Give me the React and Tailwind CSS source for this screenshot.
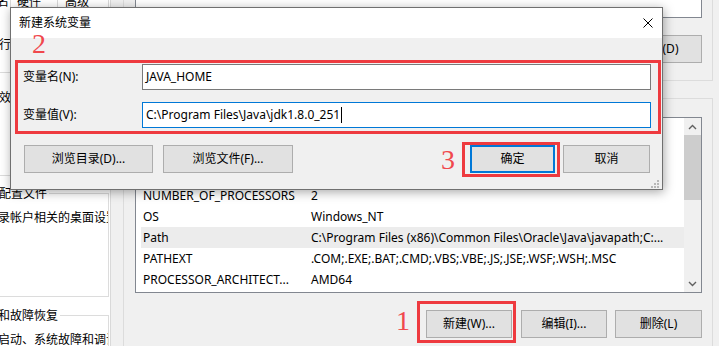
import React from 'react';

const sysVars = [
  ['ComSpec', 'C:\\WINDOWS\\system32\\cmd.exe'],
  ['DriverData', 'C:\\Windows\\System32\\Drivers\\DriverData'],
  ['NUMBER_OF_PROCESSORS', '2'],
  ['OS', 'Windows_NT'],
  ['Path', 'C:\\Program Files (x86)\\Common Files\\Oracle\\Java\\javapath;C:...'],
  ['PATHEXT', '.COM;.EXE;.BAT;.CMD;.VBS;.VBE;.JS;.JSE;.WSF;.WSH;.MSC'],
  ['PROCESSOR_ARCHITECT...', 'AMD64'],
];

const WinButton = ({ children, className = '' }) => (
  <div
    className={`flex h-[28px] shrink-0 items-center justify-center border border-[#adadad] bg-[#e1e1e1] text-[12px] text-black ${className}`}
  >
    {children}
  </div>
);

const Chevron = ({ down }) => (
  <svg width="9" height="6" viewBox="0 0 9 6">
    <path
      d={down ? 'M1 1 L4.5 4.5 L8 1' : 'M1 5 L4.5 1.5 L8 5'}
      fill="none"
      stroke="#606060"
      strokeWidth="1.4"
    />
  </svg>
);

export default function App() {
  return (
    <div className="relative flex h-[346px] w-[719px] overflow-hidden bg-[#f0f0f0] font-['Noto_Sans','Noto_Sans_CJK_SC',sans-serif] text-[12px] text-black">
      {/* System Properties - Advanced tab (behind) */}
      <div className="flex w-[111px] shrink-0 flex-col overflow-hidden border-r border-[#d9d9d9] bg-white">
        <div className="h-[8px] shrink-0 overflow-hidden">
          <div className="mt-[-7px] flex h-[17px] items-center leading-[17px]">
            <div className="h-full w-[11px] shrink-0 overflow-hidden whitespace-nowrap border-r border-[#d9d9d9]">
              <span className="ml-[-39px] inline-block">计算机名</span>
            </div>
            <div className="h-full w-[47px] shrink-0 border-r border-[#d9d9d9] pl-[6px]">硬件</div>
            <div className="h-full w-[51px] shrink-0 border-r border-[#d9d9d9] pl-[7px]">高级</div>
          </div>
        </div>

        <div className="mt-[28px] h-[17px] shrink-0 overflow-hidden whitespace-nowrap leading-[17px]">
          <span className="ml-[-25px] inline-block">要进行大多数更改，你必须作为管理员登录。</span>
        </div>

        {/* 性能 */}
        <div className="mr-[1px] mt-[19px] flex h-[104px] shrink-0 flex-col border-y border-r border-[#dcdcdc] pt-[16px]">
          <div className="h-[17px] overflow-hidden whitespace-nowrap leading-[17px]">
            <span className="ml-[-25px] inline-block">视觉效果，处理器计划，内存使用，以及虚拟内存</span>
          </div>
        </div>

        {/* 用户配置文件 */}
        <div className="mr-[1px] mt-[17px] flex h-[104px] shrink-0 flex-col border-b border-r border-[#dcdcdc]">
          <div className="mt-[-8px] flex h-[17px] items-center overflow-hidden leading-[17px]">
            <span className="ml-[-25px] shrink-0 whitespace-nowrap">用户配置文件</span>
            <div className="ml-[2px] h-px flex-1 bg-[#dcdcdc]" />
          </div>
          <div className="mt-[7px] h-[17px] overflow-hidden whitespace-nowrap leading-[17px]">
            <span className="ml-[-26px] inline-block">与登录帐户相关的桌面设置</span>
          </div>
        </div>

        {/* 启动和故障恢复 */}
        <div className="mr-[1px] mt-[18px] flex h-[60px] shrink-0 flex-col border-r border-[#dcdcdc]">
          <div className="mt-[-8px] flex h-[17px] items-center overflow-hidden leading-[17px]">
            <span className="ml-[-26px] shrink-0 whitespace-nowrap">启动和故障恢复</span>
            <div className="ml-[2px] h-px flex-1 bg-[#dcdcdc]" />
          </div>
          <div className="mt-[7px] h-[17px] overflow-hidden whitespace-nowrap leading-[17px]">
            <span className="ml-[-26px] inline-block">系统启动、系统故障和调试信息</span>
          </div>
        </div>
      </div>

      {/* Environment Variables (behind) */}
      <div className="flex flex-1 flex-col pl-[12px] pr-[6px]">
        {/* user variables group, top cut off */}
        <div className="flex h-[81px] shrink-0 flex-col border-x border-b border-[#dcdcdc] pl-[11px] pr-[10px]">
          <div className="h-[18px] border-x border-b border-[#828790] bg-white" />
          <div className="mt-[17px] flex justify-end">
            <WinButton className="w-[87px]">删除(D)</WinButton>
          </div>
        </div>

        {/* system variables group */}
        <div className="mt-[17px] flex flex-1 flex-col border-x border-t border-[#dcdcdc] pl-[11px] pr-[10px] pt-[18px]">
          <div className="flex h-[176px] shrink-0 border border-[#828790] bg-white">
            <div className="flex-1 overflow-hidden">
              <div className="flex h-[25px] items-center pl-[7px]">
                <span className="w-[168px]">变量</span>
                <span>值</span>
              </div>
              {sysVars.map(([name, value]) => (
                <div
                  key={name}
                  className={`ml-[5px] flex h-[21px] items-center whitespace-nowrap pl-[2px] ${name === 'Path' ? 'bg-[#ececec]' : ''}`}
                >
                  <span className="w-[168px] shrink-0">{name}</span>
                  <span>{value}</span>
                </div>
              ))}
            </div>
            <div className="flex w-[17px] flex-col bg-[#f0f0f0]">
              <div className="flex h-[17px] items-center justify-center">
                <Chevron />
              </div>
              <div className="h-[65px] bg-[#cdcdcd]" />
              <div className="flex-1" />
              <div className="flex h-[17px] items-center justify-center">
                <Chevron down />
              </div>
            </div>
          </div>

          <div className="mt-[8px] flex items-start justify-end">
            <span className="mr-[7px] mt-[6px] font-['Liberation_Serif',serif] text-[28px] leading-[28px] text-[#f0484d]">1</span>
            <div className="border-[3px] border-[#ee3a3f] pb-[2px] pl-[6px] pr-[1px] pt-[6px]">
              <WinButton className="w-[86px]">新建(W)...</WinButton>
            </div>
            <WinButton className="ml-[5px] mt-[9px] w-[86px]">编辑(I)...</WinButton>
            <WinButton className="ml-[8px] mt-[9px] w-[87px]">删除(L)</WinButton>
          </div>
        </div>
      </div>

      {/* 新建系统变量 dialog on top */}
      <div className="absolute left-[10px] top-[7px] flex h-[183px] w-[653px] flex-col border border-[#707070] bg-[#f0f0f0] shadow-[1px_2px_10px_rgba(0,0,0,0.35)]">
        <div className="flex h-[30px] shrink-0 items-center bg-white pl-[8px] pr-[9px]">
          <span>新建系统变量</span>
          <svg className="ml-auto" width="10" height="10" viewBox="0 0 10 10">
            <path d="M0.5 0.5 L9.5 9.5 M9.5 0.5 L0.5 9.5" stroke="#000" strokeWidth="1" />
          </svg>
        </div>

        <div className="ml-[4px] mr-[1px] mt-[22px] flex flex-col border-[3px] border-[#ee3a3f] pb-[3px] pl-[5px] pr-[7px] pt-[1px]">
          <div className="flex h-[26px] items-center">
            <span className="w-[119px] shrink-0">变量名(N):</span>
            <div className="flex h-[26px] flex-1 items-center border border-[#7a7a7a] bg-white pl-[3px]">JAVA_HOME</div>
          </div>
          <div className="mt-[12px] flex h-[26px] items-center">
            <span className="w-[119px] shrink-0">变量值(V):</span>
            <div className="flex h-[26px] flex-1 items-center border border-[#0078d7] bg-white pl-[3px]">
              <span>C:\Program Files\Java\jdk1.8.0_251</span>
              <span className="ml-px inline-block h-[16px] w-px bg-black" />
            </div>
          </div>
        </div>

        <div className="mt-[8px] flex items-start pl-[13px] pr-[12px]">
          <WinButton className="mt-[3px] w-[129px]">浏览目录(D)...</WinButton>
          <WinButton className="ml-[10px] mt-[3px] w-[130px]">浏览文件(F)...</WinButton>
          <div className="flex-1" />
          <span className="mr-[7px] mt-[4px] font-['Liberation_Serif',serif] text-[28px] leading-[28px] text-[#f0484d]">3</span>
          <div className="border-[3px] border-[#ee3a3f] pb-[1px] pl-[5px] pr-[2px]">
            <div className="flex h-[28px] w-[85px] items-center justify-center border-2 border-[#0078d7] bg-[#e1e1e1]">确定</div>
          </div>
          <WinButton className="ml-[3px] mt-[3px] w-[87px]">取消</WinButton>
        </div>

        {/* annotation 2 over title/body */}
        <span className="absolute left-[21px] top-[22px] font-['Liberation_Serif',serif] text-[28px] leading-[28px] text-[#f0484d]">2</span>

        {/* size grip */}
        <svg className="absolute bottom-[1px] right-[3px]" width="8" height="8" viewBox="0 0 8 8">
          <rect x="6" y="0" width="2" height="2" fill="#b8b8b8" />
          <rect x="3" y="3" width="2" height="2" fill="#b8b8b8" />
          <rect x="6" y="3" width="2" height="2" fill="#b8b8b8" />
          <rect x="0" y="6" width="2" height="2" fill="#b8b8b8" />
          <rect x="3" y="6" width="2" height="2" fill="#b8b8b8" />
          <rect x="6" y="6" width="2" height="2" fill="#b8b8b8" />
        </svg>
      </div>
    </div>
  );
}
